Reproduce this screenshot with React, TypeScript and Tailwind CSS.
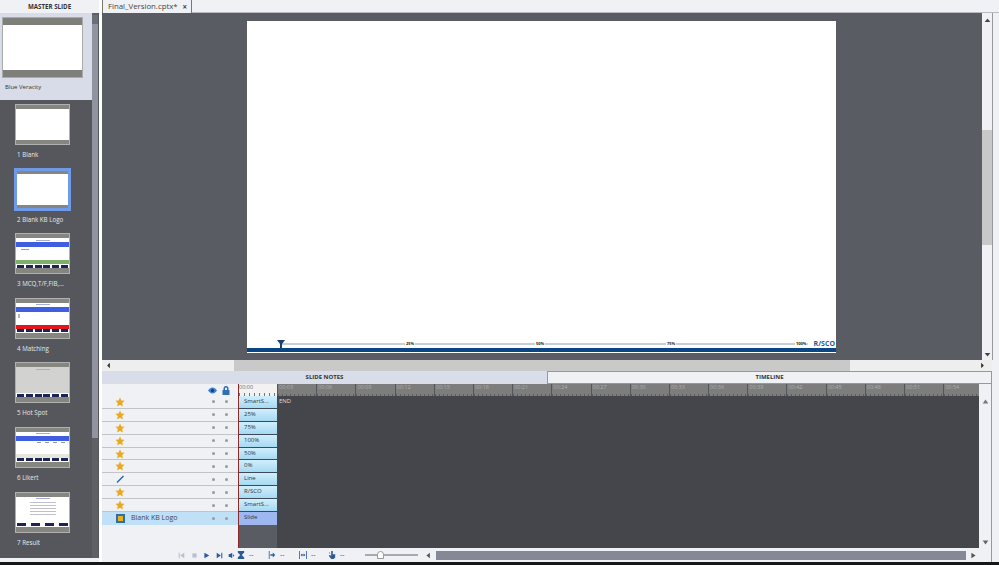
import React from "react";

const Thumb = ({ children, big, selected }: { children?: React.ReactNode; big?: boolean; selected?: boolean }) => (
  <div className={big ? "w-[81px] h-[61px] bg-[#8b8c8a] border border-[#aaa] flex flex-col" : selected ? "w-[57px] h-[43px] -ml-[1px] -mt-[1px] -mb-[1px] bg-[#6f9ae8] border-[3px] border-[#6f9ae8] flex flex-col" : "w-[55px] h-[41px] bg-[#85867f] border border-[#b0b0b0] flex flex-col"}>
    {children}
  </div>
);

const Plain = ({ big, selected }: { big?: boolean; selected?: boolean }) => (
  <Thumb big={big} selected={selected}>
    <div className={big ? "h-[7px] bg-[#7e7f79]" : selected ? "h-[3px] bg-[#85867f]" : "h-[4px] bg-[#85867f]"} />
    <div className="flex-1 bg-white" />
    <div className={big ? "h-[7px] bg-[#7e7f79]" : selected ? "h-[3px] bg-[#85867f]" : "h-[4px] bg-[#85867f]"} />
  </Thumb>
);

const Navy = ({ n = 6 }: { n?: number }) => (
  <div className="h-[4px] bg-white flex justify-between px-[1px] items-center">
    {Array.from({ length: n }).map((_, i) => (
      <div key={i} className={n === 4 ? "w-[9px] h-[3px] bg-[#1b2458]" : "w-[7px] h-[3px] bg-[#1b2458]"} />
    ))}
  </div>
);

const Quiz = ({ band, body = "bg-white", lines, n, foot }: { band?: boolean; body?: string; lines?: React.ReactNode; n?: number; foot?: string }) => (
  <Thumb>
    <div className="h-[4px] bg-[#85867f]" />
    <div className={`flex-1 ${body} flex flex-col`}>
      <div className="h-[4px] flex justify-center items-center"><div className="w-[14px] h-[1px] bg-[#a3add8]" /></div>
      {band && <div className="h-[5px] bg-[#3f5fe0]" />}
      <div className="flex-1 flex flex-col">{lines}</div>
      {foot && <div className={`h-[4px] ${foot}`} />}
      <Navy n={n} />
    </div>
    <div className="h-[5px] bg-[#85867f]" />
  </Thumb>
);

const Item = ({ label, children }: { label: string; children: React.ReactNode }) => (
  <div className="h-[64.6px] pl-[15px] shrink-0">
    {children}
    <div className="mt-[5px] text-[6.2px] leading-[9px] pl-[2px] text-[#e8e8e8]">{label}</div>
  </div>
);

const Star = () => (
  <svg width="10" height="10" viewBox="0 0 24 24"><path d="M12 1l3.4 7.2 7.6 1-5.6 5.4 1.4 7.9L12 18.8l-6.8 3.7 1.4-7.9L1 9.2l7.6-1z" fill="#eaa91f" /></svg>
);

const rows = ["SmartS...", "25%", "75%", "100%", "50%", "0%", "Line", "R/SCO", "SmartS..."];
const times = ["00:03", "00:06", "00:09", "00:12", "00:15", "00:18", "00:21", "00:24", "00:27", "00:30", "00:33", "00:36", "00:39", "00:42", "00:45", "00:48", "00:51", "00:54"];

const Dots = () => (
  <div className="flex gap-[10px] pr-[10px]">
    <div className="w-[3px] h-[3px] rounded-full bg-[#9a9a9a]" />
    <div className="w-[3px] h-[3px] rounded-full bg-[#9a9a9a]" />
  </div>
);

const Dash = () => <span className="text-[7px] text-[#444] ml-[4px]">--</span>;

const Tri = ({ d, c = "#5a6a86", size = 7 }: { d: string; c?: string; size?: number }) => (
  <svg width={size} height={size} viewBox="0 0 10 10"><path d={d} fill={c} /></svg>
);

const Marker = ({ t, w }: { t: string; w: string }) => (
  <div className={`${w} h-[5px] flex items-center`}><span className="text-[4px] leading-[4px] font-bold text-[#112] bg-white block px-[1px]">{t}</span></div>
);

export default function App() {
  return (
    <div className="w-[999px] h-[565px] overflow-hidden bg-[#f0f1f5] flex flex-col font-['Open_Sans',sans-serif] text-[#333]">
      <div className="h-[562px] flex">
        {/* left */}
        <div className="w-[99px] shrink-0 flex flex-col">
          <div className="h-[13px] flex items-center justify-center text-[6.2px] font-bold text-[#333]">MASTER SLIDE</div>
          <div className="h-[545px] bg-[#55575c] flex">
            <div className="w-[92px] flex flex-col overflow-hidden">
              <div className="h-[87px] bg-[#d8dce8] pl-[2px] pt-[4px] shrink-0">
                <Plain big />
                <div className="mt-[5px] ml-[3px] text-[6px] leading-[9px] text-[#333]">Blue Veracity</div>
              </div>
              <div className="h-[4px] shrink-0" />
              <Item label="1 Blank"><Plain /></Item>
              <Item label="2 Blank KB Logo"><Plain selected /></Item>
              <Item label="3 MCQ,T/F,FIB,...">
                <Quiz band foot="bg-[#7fae6a]" n={6} lines={<div className="mt-[2px] ml-[5px] w-[8px] h-[1px] bg-[#9a9aa8]" />} />
              </Item>
              <Item label="4 Matching">
                <Quiz band foot="bg-[#e3151f]" n={6} lines={<div className="mt-[2px] ml-[2px] w-[2px] h-[4px] bg-[#b8b8c0]" />} />
              </Item>
              <Item label="5 Hot Spot"><Quiz body="bg-[#d2d2d0]" n={6} /></Item>
              <Item label="6 Likert">
                <Quiz band foot="bg-[#e6e6df]" n={6} lines={<div className="mt-[1px] flex justify-end gap-[4px] pr-[4px]"><div className="w-[4px] h-[1px] bg-[#999]" /><div className="w-[4px] h-[1px] bg-[#999]" /><div className="w-[4px] h-[1px] bg-[#999]" /><div className="w-[4px] h-[1px] bg-[#999]" /></div>} />
              </Item>
              <Item label="7 Result">
                <Quiz n={4} lines={<div className="mt-[1px] flex flex-col gap-[2px] items-center">{[0, 1, 2, 3, 4].map((i) => <div key={i} className="w-[26px] h-[1px] bg-[#c0c0cc]" />)}</div>} />
              </Item>
            </div>
            <div className="w-[6px] h-full flex flex-col bg-[#5f6066]">
              <div className="h-[9px] mt-[2px] bg-[#6c6e78]" />
              <div className="h-[414px] bg-[#9093a0]" />
            </div>
          </div>
        </div>
        <div className="w-[3px] bg-white shrink-0" />

        {/* right */}
        <div className="flex-1 flex flex-col min-w-0">
          <div className="h-[13px] flex border-b border-[#b8bac0] shrink-0">
            <div className="w-[90px] h-[13px] border-x border-[#777] bg-[#f0f1f5] flex items-center pl-[5px] text-[7.8px] text-[#444]">
              <span>Final_Version.cptx*</span>
              <span className="ml-auto mr-[4px] text-[8px] font-bold leading-none">×</span>
            </div>
          </div>

          {/* stage */}
          <div className="h-[347px] flex shrink-0">
            <div className="w-[880px] bg-[#5a5c63] flex justify-center pt-[8px] pr-[1px] shrink-0">
              <div className="w-[589px] h-[332px] bg-white flex flex-col justify-end pb-[1px]">
                <div className="relative h-[9px] flex items-center pl-[30px] pr-[1px]">
                  <div className="absolute left-[34px] right-[28px] top-[4px] h-[2px] bg-[#c4d0d8]" />
                  <svg className="relative" width="8" height="8" viewBox="0 0 8 8"><path d="M0 0h8L5 4v4H3V4z" fill="#1c3f72" /></svg>
                  <div className="relative flex-1 flex pl-[120px] items-center">
                    <Marker t="25%" w="w-[130px]" />
                    <Marker t="50%" w="w-[131px]" />
                    <Marker t="75%" w="w-[129px]" />
                    <Marker t="100%" w="w-[14px]" />
                    <span className="ml-auto text-[7px] leading-[7px] font-bold text-[#1f5a9a] bg-white pl-[1px]">R/SCO</span>
                  </div>
                </div>
                <div className="h-[4px] bg-[#0b4684]" />
              </div>
            </div>
            <div className="w-[11px] border-r border-[#999] flex flex-col items-center bg-[#f0f1f5]">
              <div className="h-[117px] w-full flex justify-center pt-[4px]"><Tri d="M5 2l4 5H1z" c="#444" /></div>
              <div className="h-[115px] w-full bg-[#c8c8c8]" />
              <div className="flex-1 flex items-end pb-[2px]"><Tri d="M5 8L1 3h8z" c="#444" /></div>
            </div>
          </div>

          {/* h scroll */}
          <div className="h-[11px] flex items-center bg-[#eeeeee] shrink-0 w-[890px]">
            <div className="w-[132px] flex pl-[3px]"><Tri d="M7 1L3 5l4 4z" c="#333" /></div>
            <div className="w-[616px] h-full bg-[#c9c9c9]" />
            <div className="flex-1 flex justify-end pr-[6px]"><Tri d="M3 1l4 4-4 4z" c="#333" /></div>
          </div>

          {/* tabs */}
          <div className="h-[13px] flex w-[890px] shrink-0 text-[6px] font-bold text-[#333]">
            <div className="w-[445px] bg-[#d8dde9] flex items-center justify-center">SLIDE NOTES</div>
            <div className="flex-1 border border-[#999] flex items-center justify-center">TIMELINE</div>
          </div>

          {/* timeline */}
          <div className="flex-1 flex flex-col w-[890px] min-h-0 border-r border-[#999]">
            <div className="h-[164px] flex shrink-0">
              <div className="w-[136px] shrink-0 flex flex-col">
                <div className="h-[12px] flex items-center justify-end pr-[8px] gap-[5px] shrink-0">
                  <svg width="9" height="7" viewBox="0 0 18 12"><path d="M9 0C5 0 2 3 0 6c2 3 5 6 9 6s7-3 9-6c-2-3-5-6-9-6z" fill="#3d7fc8" /><circle cx="9" cy="6" r="3" fill="#173a6a" /></svg>
                  <svg width="8" height="9" viewBox="0 0 16 18"><path d="M3 8V5a5 5 0 0110 0v3h2v10H1V8zm3 0h4V5a2 2 0 00-4 0z" fill="#2f6db5" /></svg>
                </div>
                {rows.map((r, i) => (
                  <div key={i} className="h-[12.9px] shrink-0 border-b border-[#c3c4c9] flex items-center justify-between pl-[13px]">
                    {r === "Line" ? (
                      <svg width="10" height="10" viewBox="0 0 10 10"><path d="M2 8.5L8.5 2" stroke="#2468b0" strokeWidth="1.5" /></svg>
                    ) : <Star />}
                    <Dots />
                  </div>
                ))}
                <div className="h-[13px] shrink-0 bg-[#bfe0f7] flex items-center justify-between pl-[14px]">
                  <div className="flex items-center">
                    <div className="w-[9px] h-[9px] bg-[#2f6fa8] flex items-center justify-center"><div className="w-[5px] h-[5px] bg-[#e8b020]" /></div>
                    <span className="ml-[6px] text-[7px] text-[#445]">Blank KB Logo</span>
                  </div>
                  <Dots />
                </div>
              </div>

              <div className="w-[741px] shrink-0 flex flex-col border-l border-[#8c2a2a]">
                <div className="h-[12px] flex shrink-0">
                  <div className="w-[38px] bg-[#f2f2f2] text-[5.5px] leading-[7px] text-[#666] bg-[repeating-linear-gradient(90deg,#777_0,#777_1px,transparent_1px,transparent_5px)] bg-[length:100%_3px] bg-bottom bg-no-repeat">00:00</div>
                  <div className="w-[702px] flex bg-[#7d7d7d] overflow-hidden">
                    {times.map((t) => (
                      <div key={t} className="w-[39.2px] shrink-0 border-l border-[#55565a] text-[5.5px] leading-[7px] pl-[1px] text-[#b0b0b0] bg-[repeating-linear-gradient(90deg,#5c5c5c_0,#5c5c5c_1px,transparent_1px,transparent_4px)] bg-[length:100%_2px] bg-bottom bg-no-repeat">{t}</div>
                    ))}
                  </div>
                </div>
                <div className="flex-1 flex min-h-0">
                  <div className="w-[38px] shrink-0 flex flex-col bg-[#5a5c63]">
                    {rows.map((r, i) => (
                      <div key={i} className="h-[12.9px] shrink-0 border-b border-[#3c4a58] bg-gradient-to-b from-[#d0effc] to-[#a6d9f2] text-[6px] leading-[10px] pl-[5px] text-[#334]">{r}</div>
                    ))}
                    <div className="h-[13px] shrink-0 bg-[#9db8f0] text-[6px] leading-[10px] pl-[5px] text-[#334]">Slide</div>
                  </div>
                  <div className="w-[702px] bg-[#45464b] text-[6px] leading-[9px] pl-[2px] pt-[1px] text-[#ddd]">END</div>
                </div>
              </div>

              <div className="flex-1 flex flex-col items-center justify-between pt-[14px] pb-[2px]">
                <Tri d="M5 2l4 6H1z" c="#777" />
                <Tri d="M5 8L1 2h8z" c="#666" />
              </div>
            </div>

            {/* controls */}
            <div className="flex-1 flex items-center">
              <div className="w-[135px] flex items-center justify-end gap-[5.5px] pr-[2px] shrink-0">
                <Tri d="M1 1h1.500v8H1zM9 1v8L3 5z" c="#b6c0d0" />
                <Tri d="M2 2h6v6H2z" c="#b6c0d0" />
                <Tri d="M2 1l7 4-7 4z" c="#2c5c98" />
                <Tri d="M1 1l6 4-6 4zM7.500 1H9v8H7.500z" c="#2c5c98" />
                <Tri d="M1 3h2l3-2v8L3 7H1zM7 3l2 2-2 2z" c="#2c5c98" />
              </div>
              <div className="flex items-center w-[128px] shrink-0">
                <div className="w-[31px] flex items-center"><Tri size={8} d="M1 0h8v2L6 5l3 3v2H1V8l3-3-3-3z" c="#2c5c98" /><Dash /></div>
                <div className="w-[31px] flex items-center"><Tri size={8} d="M1 0h1v10H1zM3 4h3V2l3 3-3 3V6H3z" c="#2c5c98" /><Dash /></div>
                <div className="w-[29px] flex items-center"><Tri size={8} d="M0 0h1v10H0zM9 0h1v10H9zM2 5l2-2v1.500h2V3l2 2-2 2V5.500H4V7z" c="#2c5c98" /><Dash /></div>
                <div className="w-[37px] flex items-center"><Tri size={8} d="M4 0h2v4h3v4l-2 2H4L1 6l1-1 2 1zM1 1l2 2-1 .5z" c="#2c5c98" /><Dash /></div>
              </div>
              <div className="w-[53px] h-[8px] relative flex items-center shrink-0">
                <div className="w-full h-[2px] bg-[#a8aab0]" />
                <div className="absolute left-[12px] top-0 w-[7px] h-[8px] bg-white border border-[#999] rounded-t-full" />
              </div>
              <div className="ml-[5px] w-[10px] flex justify-center"><Tri d="M7 1L2 5l5 4z" c="#555" /></div>
              <div className="ml-[3px] w-[530px] h-[9px] bg-[#858995]" />
              <div className="ml-[4px]"><Tri d="M2 1l6 4-6 4z" c="#555" /></div>
            </div>
          </div>
        </div>
      </div>
      <div className="flex-1 bg-[#161719]" />
    </div>
  );
}
